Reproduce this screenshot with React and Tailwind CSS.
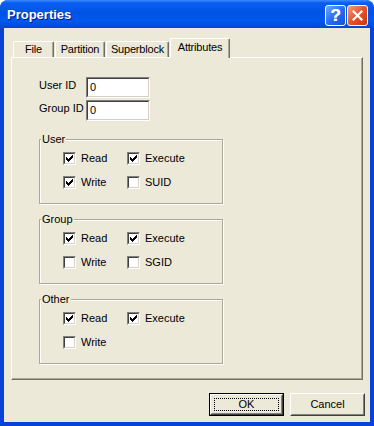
import React from "react";

const font = "font-['Liberation_Sans',Arial,sans-serif]";

const Check = () => (
  <svg width="7" height="7" viewBox="0 0 7 7" shapeRendering="crispEdges" className="block">
    <path
      fill="#000"
      d="M6 0h1v1h-1z M5 1h2v1h-2z M0 2h1v1h-1z M4 2h3v1h-3z M0 3h2v1h-2z M3 3h3v1h-3z M0 4h5v1h-5z M1 5h3v1h-3z M2 6h1v1h-1z"
    />
  </svg>
);

const CheckBox = ({ label, checked }) => (
  <div className="flex items-center h-[13px]">
    <span className="w-[13px] h-[13px] border border-t-[#808080] border-l-[#808080] border-b-white border-r-white">
      <span className="flex items-center justify-center w-full h-full bg-white border border-t-[#404040] border-l-[#404040] border-b-[#d4d0c8] border-r-[#d4d0c8]">
        {checked && <Check />}
      </span>
    </span>
    <span className="ml-[5px] leading-[13px]">{label}</span>
  </div>
);

const GroupBox = ({ title, items }) => (
  <div className="relative w-[184px] h-[65px] border border-[#aca899] shadow-[inset_1px_1px_0_#fff,1px_1px_0_#fff]">
    <span className="absolute -top-[7px] left-[1px] px-[1px] bg-[#ece9d8] leading-[13px]">{title}</span>
    <div className="grid grid-cols-[64px_auto] gap-y-[11px] pt-[12px] pl-[23px]">
      {items.map(([label, checked]) => (
        <CheckBox key={label} label={label} checked={checked} />
      ))}
    </div>
  </div>
);

const Field = ({ value }) => (
  <div className="w-[64px] h-[21px] border border-t-[#808080] border-l-[#808080] border-b-white border-r-white">
    <div className="w-full h-full bg-white border border-t-[#404040] border-l-[#404040] border-b-[#d4d0c8] border-r-[#d4d0c8] pl-[2px] leading-[17px]">
      {value}
    </div>
  </div>
);

const tabs = [
  { name: "File", w: "w-[41px]" },
  { name: "Partition", w: "w-[50px]" },
  { name: "Superblock", w: "w-[63px]" },
];

export default function App() {
  return (
    <div className={`w-[374px] h-[426px] bg-white ${font} text-[11px] text-black`}>
      <div className="flex flex-col w-full h-full rounded-t-[8px] overflow-hidden bg-[#0842d7]">
        {/* Title bar */}
        <div className="relative flex items-center h-[28px] pl-[7px] pt-[2px] bg-[linear-gradient(to_bottom,#3d8dff_0%,#0a5ef2_10%,#0054e3_45%,#0058ee_75%,#0046d2_100%)]">
          <span className="text-white font-bold text-[13px] [text-shadow:1px_1px_0_#0a1883]">Properties</span>
          <div className="ml-auto mr-[6px] flex gap-[1px]">
            <div className="w-[21px] h-[21px] rounded-[3px] border border-white bg-[linear-gradient(135deg,#6fa6ff_0%,#2a6cf0_50%,#1550d8_100%)] flex items-center justify-center">
              <span className="text-white font-bold text-[17px] leading-none [text-shadow:0.5px_0_0_#fff]">?</span>
            </div>
            <div className="w-[21px] h-[21px] rounded-[3px] border border-white bg-[linear-gradient(135deg,#f0a080_0%,#e0552a_50%,#c33a0f_100%)] flex items-center justify-center">
              <svg width="11" height="11" viewBox="0 0 11 11">
                <path d="M1.5 1.5L9.5 9.5M9.5 1.5L1.5 9.5" stroke="#fff" strokeWidth="2.2" strokeLinecap="square" />
              </svg>
            </div>
          </div>
        </div>

        {/* Client area */}
        <div className="flex-1 mx-[4px] mb-[4px] bg-[#ece9d8] pt-[10px] px-[7px]">
          {/* Tabs */}
          <div className="relative z-10 flex items-end h-[19px] pl-[2px]">
            {tabs.map((t) => (
              <div
                key={t.name}
                className={`${t.w} h-[16px] mr-[1px] rounded-t-[2px] border-t border-l border-r border-t-white border-l-white border-r-[#716f64] shadow-[inset_-1px_0_0_#aca899] text-center tracking-[-0.2px] leading-[14px]`}
              >
                {t.name}
              </div>
            ))}
            <div className="w-[60px] h-[20px] -mb-[1px] rounded-t-[2px] bg-[#ece9d8] border-t border-l border-r border-t-white border-l-white border-r-[#716f64] shadow-[inset_-1px_0_0_#aca899] text-center tracking-[-0.2px] leading-[16px]">
              Attributes
            </div>
          </div>

          {/* Panel */}
          <div className="h-[323px] border border-t-white border-l-white border-r-[#716f64] border-b-[#716f64] shadow-[inset_-1px_-1px_0_#aca899] pt-[19px] pl-[27px]">
            <div className="grid grid-cols-[47px_64px] gap-y-[2px] items-start">
              <span className="leading-[13px] pt-[2px]">User ID</span>
              <Field value="0" />
              <span className="leading-[13px] pt-[2px]">Group ID</span>
              <Field value="0" />
            </div>
            <div className="flex flex-col gap-[15px] mt-[18px]">
              <GroupBox title="User" items={[["Read", true], ["Execute", true], ["Write", true], ["SUID", false]]} />
              <GroupBox title="Group" items={[["Read", true], ["Execute", true], ["Write", false], ["SGID", false]]} />
              <GroupBox title="Other" items={[["Read", true], ["Execute", true], ["Write", false]]} />
            </div>
          </div>

          {/* Buttons */}
          <div className="flex justify-end gap-[6px] mt-[13px] -mr-[2px]">
            <button className="w-[75px] h-[23px] border border-black bg-[#ece9d8] p-0">
              <div className="w-full h-full border border-t-white border-l-white border-b-[#404040] border-r-[#404040]">
                <div className="w-full h-full border border-t-transparent border-l-transparent border-b-[#808080] border-r-[#808080] p-[2px]">
                  <div className="w-full h-full border border-dotted border-black flex items-center justify-center leading-none">OK</div>
                </div>
              </div>
            </button>
            <button className="w-[75px] h-[23px] border border-t-white border-l-white border-b-[#404040] border-r-[#404040] bg-[#ece9d8] p-0">
              <div className="w-full h-full border border-t-[#ece9d8] border-l-[#ece9d8] border-b-[#808080] border-r-[#808080] flex items-center justify-center leading-none">
                Cancel
              </div>
            </button>
          </div>
        </div>
      </div>
    </div>
  );
}
